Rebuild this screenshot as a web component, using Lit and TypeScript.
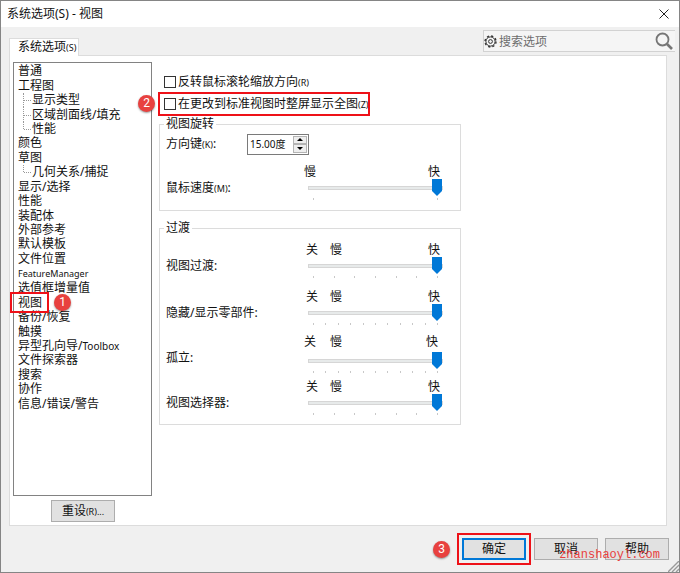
import { LitElement, html, css, svg, nothing } from "lit";
import { customElement, property } from "lit/decorators.js";

const base = css`
  * { box-sizing: border-box; }
  button, input { font: inherit; color: inherit; margin: 0; }
  small { font-size: 9px; }
`;

interface Node { text: string; child?: boolean; last?: boolean; latin?: string; current?: boolean }

const NODES: Node[] = [
  { text: "普通" },
  { text: "工程图" },
  { text: "显示类型", child: true },
  { text: "区域剖面线/填充", child: true },
  { text: "性能", child: true, last: true },
  { text: "颜色" },
  { text: "草图" },
  { text: "几何关系/捕捉", child: true, last: true },
  { text: "显示/选择" },
  { text: "性能" },
  { text: "装配体" },
  { text: "外部参考" },
  { text: "默认模板" },
  { text: "文件位置" },
  { text: "", latin: "FeatureManager" },
  { text: "选值框增量值" },
  { text: "视图", current: true },
  { text: "备份/恢复" },
  { text: "触摸" },
  { text: "异型孔向导/", latin: "Toolbox" },
  { text: "文件探索器" },
  { text: "搜索" },
  { text: "协作" },
  { text: "信息/错误/警告" },
];

@customElement("option-tree")
export class OptionTree extends LitElement {
  static styles = [base, css`
    :host { display: block; border: 1px solid #828282; background: #fff; height: 434px; }
    ul { list-style: none; margin: 0; padding: 1px 0 0 4px; display: grid; grid-auto-rows: 1fr; height: 348px; }
    li { display: flex; align-items: center; line-height: 14px; white-space: nowrap; position: relative; }
    .mixed small { font-size: 10px; }
    .child { padding-left: 14px; }
    .child::before { content: ""; position: absolute; left: 5px; top: 0; bottom: 0; border-left: 1px dotted #999; }
    .child.last::before { bottom: 50%; }
    .child::after { content: ""; position: absolute; left: 6px; width: 7px; top: 50%; border-top: 1px dotted #999; }
    .mark { position: absolute; left: -8px; top: -4px; width: 39px; height: 21px; border: 2px solid #ee1118; z-index: 1; }
    step-badge { position: absolute; left: 36px; top: -2px; z-index: 1; }
  `];
  render() {
    return html`<ul>${NODES.map((n) => html`
      <li class="${n.child ? "child" : ""} ${n.last ? "last" : ""} ${n.text && n.latin ? "mixed" : ""}">
        <span>${n.text}${n.latin ? html`<small>${n.latin}</small>` : nothing}</span>
        ${n.current ? html`<span class="mark"></span><step-badge n="1"></step-badge>` : nothing}
      </li>`)}</ul>`;
  }
}

@customElement("step-badge")
export class StepBadge extends LitElement {
  @property() n = "";
  static styles = css`
    :host { display: block; width: 17px; height: 17px; border-radius: 50%; background: #e8413f; color: #fff;
      font: 12px/17px Roboto, sans-serif; text-align: center; box-shadow: 0 1px 2px #0006; }
  `;
  render() { return html`${this.n}`; }
}

@customElement("speed-slider")
export class SpeedSlider extends LitElement {
  @property() label = "";
  @property() hotkey = "";
  @property() off = "";
  @property({ type: Number }) steps = 2;
  @property({ type: Boolean }) loose = false;
  static styles = [base, css`
    :host { display: grid; grid-template-columns: 138px 139px; line-height: 16px; white-space: nowrap; }
    label { padding-top: 16px; }
    .caps { display: grid; grid-template-columns: 24px 1fr auto; padding: 0 3px 0 2px; }
    .caps.single { grid-template-columns: 1fr auto; padding-left: 0; }
    .loose .caps { padding: 0 5px 3px 0; grid-template-columns: 26px 1fr auto; }
    input { appearance: none; -webkit-appearance: none; display: block; width: 135px; height: 16px; margin-left: 4px; background: none; }
    input::-webkit-slider-runnable-track { height: 4px; background: #e7eaea; border: 1px solid #d6d6d6; }
    input::-webkit-slider-thumb { -webkit-appearance: none; width: 10px; height: 17px; margin-top: -8px; background: #0078d7;
      clip-path: polygon(0 0, 100% 0, 100% 70%, 50% 100%, 0 70%); }
    .ticks { display: flex; justify-content: space-between; margin: 2px 5px 0 9px; height: 2px; }
    .ticks i { width: 1px; background: #c8c8c8; }
  `];
  render() {
    return html`
      <label for="s">${this.label}${this.hotkey ? html`<small>(${this.hotkey})</small>` : nothing}:</label>
      <div class=${this.loose ? "loose" : ""}>
        <div class="caps ${this.off ? "" : "single"}">
          ${this.off ? html`<span>${this.off}</span>` : nothing}<span>慢</span><span>快</span>
        </div>
        <input id="s" type="range" min="1" max=${this.steps} .value=${String(this.steps)} aria-label=${this.label}>
        <div class="ticks">${Array.from({ length: this.steps }, () => html`<i></i>`)}</div>
      </div>`;
  }
}

const gear = svg`
  <g fill="none" stroke="#333">
    <circle cx="6.5" cy="6.5" r="5.5" stroke-width="1.4" stroke-dasharray="2.2 2.12"/>
    <circle cx="6.5" cy="6.5" r="4.6" stroke-width="1"/>
    <circle cx="6.5" cy="6.5" r="1.9" stroke-width="1"/>
  </g>`;

@customElement("app-root")
export class AppRoot extends LitElement {
  static styles = [base, css`
    :host { display: flex; flex-direction: column; min-height: 100vh; box-sizing: border-box; position: relative;
      border: 1px solid #858585; background: #f0f0f0; color: #111;
      font: 12px/16px "Noto Sans", "Noto Sans CJK SC", sans-serif; }
    header { display: flex; justify-content: space-between; align-items: center; height: 26px; background: #fff; padding: 0 10px 0 6px; }
    h1 { font: inherit; margin: 0; }
    .close { border: 0; background: none; padding: 0; display: flex; }
    .top { display: flex; justify-content: space-between; height: 28px; padding: 0 4px 0 8px; }
    .tab { align-self: flex-end; height: 18px; width: 70px; padding: 0 0 0 8px; background: #fff; border: 1px solid #dcdcdc; border-bottom: 0;
      text-align: left; white-space: nowrap; line-height: 16px; position: relative; margin-bottom: -1px; }
    .search { display: flex; align-items: center; gap: 2px; width: 192px; height: 22px; margin-top: 3px; border: 1px solid #d2d2d2; border-right: 0; background: #f5f5f5; }
    .search input { flex: 1; min-width: 0; border: 0; background: none; padding: 0; outline: 0; height: 18px; }
    .search input::placeholder { color: #6d6d6d; opacity: 1; }
    .search button { border: 0; background: none; padding: 0 2px 0 0; display: flex; }
    .panel { display: flex; flex: 1; margin: 0 12px 0 8px; border: 1px solid #dcdcdc; background: #fff; padding: 6px 4px 3px 3px; gap: 7px; }
    .side { width: 139px; }
    .btn { width: 64px; height: 22px; padding: 0; background: #e1e1e1; border: 1px solid #adadad; white-space: nowrap; line-height: 16px; }
    .side .btn { display: block; margin: 4px 0 0 38px; }
    .main { width: 302px; padding-top: 9px; }
    .check { display: flex; align-items: center; height: 22px; padding-left: 5px; gap: 2px; white-space: nowrap; position: relative; }
    .check input { appearance: none; -webkit-appearance: none; width: 12px; height: 12px; border: 1px solid #333; background: #fff; }
    .mark { outline: 2px solid #ee1118; outline-offset: -1px; width: 210px; }
    .check step-badge { position: absolute; left: -21px; top: 2px; }
    fieldset { border: 1px solid #dcdcdc; margin: 0; padding: 0 0 0 6px; min-width: 0; }
    legend { padding: 0 2px; margin-left: -2px; line-height: 16px; }
    .rotate { margin-top: 1px; height: 95px; }
    .fade { margin-top: 9px; height: 205px; }
    .angle { display: flex; align-items: center; height: 22px; margin-top: 1px; }
    .angle label { width: 81px; }
    .spin { display: flex; width: 62px; height: 21px; border: 1px solid #7a7a7a; padding: 1px; }
    .spin input { flex: 1; min-width: 0; border: 0; padding: 0 0 0 1px; outline: 0; font-size: 10px; }
    .arrows { display: flex; flex-direction: column; width: 14px; }
    .arrows button { flex: 1; min-height: 0; border: 1px solid #b4b4b4; background: #eee; padding: 0; display: flex; align-items: center; justify-content: center; }
    .rotate speed-slider { margin-top: 9px; }
    .sliders { display: grid; grid-template-rows: 47px 45px 45px 40px; margin-top: 6px; }
    footer { display: flex; justify-content: flex-end; align-items: center; gap: 7px; padding-right: 10px; height: 46px; }
    .confirm { display: flex; border: 2px solid #ee1118; padding: 3px; margin-right: -4px; }
    .confirm .btn { border: 2px solid #0078d7; }
    .water { position: absolute; right: 19px; bottom: 9px; font: 12px/16px "Liberation Mono", monospace; color: #e8403e; }
    .grip { position: absolute; right: 0; bottom: 0; }
  `];
  render() {
    return html`
      <header>
        <h1>系统选项(S) - 视图</h1>
        <button class="close" aria-label="关闭"><svg width="10" height="10" viewBox="0 0 10 10"><path d="M.5 .5 9.5 9.5M9.5 .5 .5 9.5" stroke="#222" fill="none"/></svg></button>
      </header>
      <div class="top">
        <button class="tab">系统选项<small>(S)</small></button>
        <div class="search">
          <svg width="13" height="13" viewBox="0 0 13 13">${gear}</svg>
          <input type="search" placeholder="搜索选项" aria-label="搜索选项">
          <button aria-label="搜索"><svg width="18" height="18" viewBox="0 0 18 18" fill="none" stroke="#767676"><circle cx="7.5" cy="7.5" r="6" stroke-width="1.8"/><path d="m12 12 5 5" stroke-width="2.6"/></svg></button>
        </div>
      </div>
      <section class="panel">
        <div class="side">
          <option-tree></option-tree>
          <button class="btn">重设<small>(R)...</small></button>
        </div>
        <div class="main">
          <label class="check"><input type="checkbox"><span>反转鼠标滚轮缩放方向<small>(R)</small></span></label>
          <label class="check mark"><input type="checkbox"><span>在更改到标准视图时整屏显示全图<small>(Z)</small></span><step-badge n="2"></step-badge></label>
          <fieldset class="rotate">
            <legend>视图旋转</legend>
            <div class="angle">
              <label for="angle">方向键<small>(K)</small>:</label>
              <span class="spin">
                <input id="angle" type="text" value="15.00度">
                <span class="arrows">
                  <button aria-label="增加"><svg width="6" height="3" viewBox="0 0 6 3"><path d="M0 3 3 0l3 3z"/></svg></button>
                  <button aria-label="减少"><svg width="6" height="3" viewBox="0 0 6 3"><path d="M0 0h6L3 3z"/></svg></button>
                </span>
              </span>
            </div>
            <speed-slider label="鼠标速度" hotkey="M" steps="2"></speed-slider>
          </fieldset>
          <fieldset class="fade">
            <legend>过渡</legend>
            <div class="sliders">
              <speed-slider label="视图过渡" off="关" steps="7"></speed-slider>
              <speed-slider label="隐藏/显示零部件" off="关" steps="11"></speed-slider>
              <speed-slider label="孤立" off="关" steps="11" loose></speed-slider>
              <speed-slider label="视图选择器" off="关" steps="7"></speed-slider>
            </div>
          </fieldset>
        </div>
      </section>
      <footer>
        <step-badge n="3"></step-badge>
        <div class="confirm"><button class="btn">确定</button></div>
        <button class="btn">取消</button>
        <button class="btn">帮助</button>
      </footer>
      <span class="water">zhanshaoyl.com</span>
      <svg class="grip" width="11" height="11" viewBox="0 0 11 11"><path d="M0 11 11 0M4 11l7-7M8 11l3-3" stroke="#999" stroke-width="1.4"/></svg>
    `;
  }
}
